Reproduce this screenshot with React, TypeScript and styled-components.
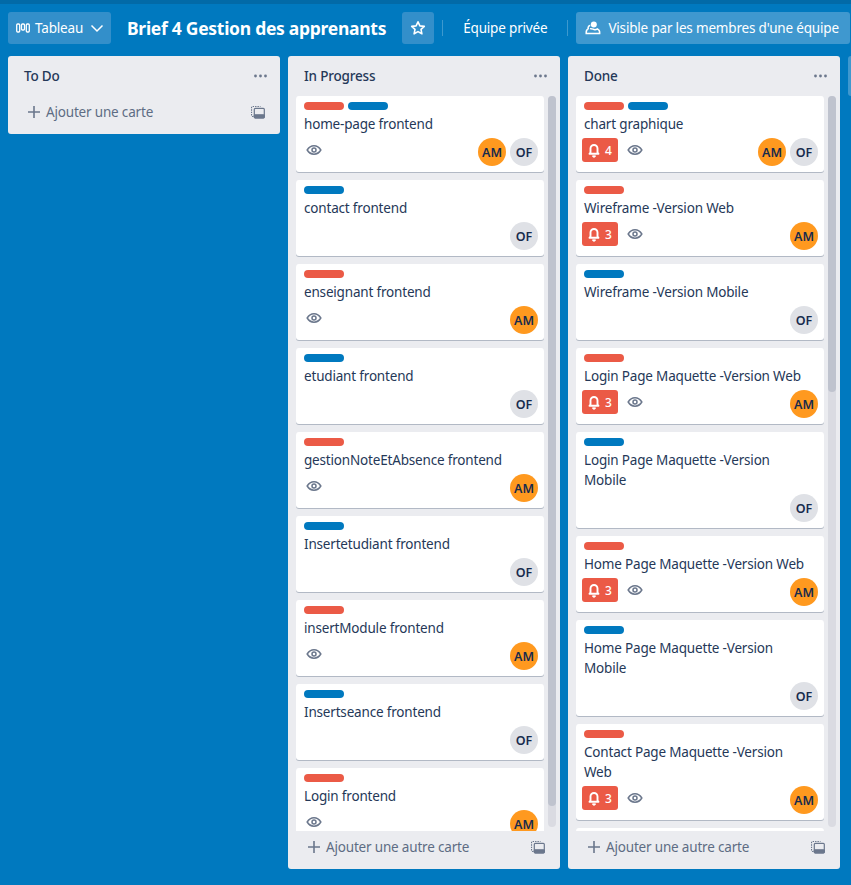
import React from 'react';
import styled, { createGlobalStyle } from 'styled-components';

const GlobalStyle = createGlobalStyle`
    html, body {
        margin: 0;
        padding: 0;
        height: 100%;
        overflow: hidden;
    }
    body {
        font-family: "Noto Sans", "Open Sans", sans-serif;
        background: #0079bf;
        color: #172b4d;
    }
`;

const Page = styled.div`
    width: 851px;
    height: 885px;
    overflow: hidden;
    display: flex;
    flex-direction: column;
`;

const TopStrip = styled.div`
    height: 4px;
    flex: none;
    background: #026aa7;
`;

const BoardHeader = styled.div`
    display: flex;
    align-items: center;
    flex: none;
    height: 32px;
    margin-top: 8px;
    padding-left: 8px;
    white-space: nowrap;
`;

const HeaderButton = styled.div<{ $strong?: boolean }>`
    display: flex;
    align-items: center;
    flex: none;
    height: 32px;
    border-radius: 3px;
    background: ${(p) => (p.$strong ? '#3f98cf' : '#338fca')};
    color: #fff;
    font-size: 13.5px;
    letter-spacing: -0.18px;
`;

const ViewButton = styled(HeaderButton)`
    width: 103px;
    padding-left: 8px;
    box-sizing: border-box;
    gap: 5px;
`;

const BoardTitle = styled.h1`
    margin: 0 16px;
    color: #fff;
    font-size: 17.5px;
    font-weight: 700;
    line-height: 32px;
    letter-spacing: -0.28px;
`;

const StarButton = styled(HeaderButton)`
    width: 32px;
    justify-content: center;
`;

const Divider = styled.span`
    flex: none;
    width: 1px;
    height: 16px;
    background: rgba(255, 255, 255, 0.24);
    margin: 0 8px;
`;

const TeamLabel = styled.span`
    color: #fff;
    font-size: 13.5px;
    letter-spacing: -0.18px;
    padding: 0 12px;
`;

const VisibleButton = styled(HeaderButton)`
    padding: 0 11px 0 9px;
    gap: 7px;
`;

const Board = styled.div`
    display: flex;
    align-items: flex-start;
    gap: 8px;
    padding: 12px 0 0 8px;
`;

const Column = styled.section<{ $full?: boolean }>`
    flex: none;
    width: 272px;
    height: ${(p) => (p.$full ? '813px' : 'auto')};
    display: flex;
    flex-direction: column;
    background: #ebecf0;
    border-radius: 3px;
`;

const NextColumnEdge = styled.div`
    flex: none;
    width: 272px;
    height: 40px;
    background: #3f98cf;
    border-radius: 3px;
`;

const ColumnHeader = styled.header`
    display: flex;
    align-items: center;
    justify-content: space-between;
    flex: none;
    height: 40px;
    padding: 0 13px 0 16px;
`;

const ColumnTitle = styled.h2`
    margin: 0;
    font-size: 13.5px;
    font-weight: 500;
    letter-spacing: -0.18px;
    color: #253858;
`;

const ScrollArea = styled.div`
    flex: 1;
    min-height: 0;
    display: flex;
    gap: 4px;
    padding: 0 4px 0 8px;
`;

const CardList = styled.div`
    width: 248px;
    flex: none;
    overflow: hidden;
`;

const ScrollTrack = styled.div`
    width: 8px;
    flex: none;
    height: 731px;
    border-radius: 4px;
    background: #dadbe2;
`;

const ScrollThumb = styled.div<{ $height: number }>`
    height: ${(p) => p.$height}px;
    border-radius: 4px;
    background: #bfc3ce;
`;

const Card = styled.article`
    background: #fff;
    border-radius: 3px;
    box-shadow: 0 1px 0 #091e4240;
    margin-bottom: 8px;
    padding: 6px 6px 6px 8px;
    box-sizing: border-box;
`;

const CardStub = styled(Card)`
    height: 76px;
`;

const LabelRow = styled.div`
    display: flex;
    gap: 4px;
    height: 8px;
    margin-bottom: 4px;
`;

const Label = styled.span<{ $color: string }>`
    width: 40px;
    height: 8px;
    border-radius: 4px;
    background: ${(p) => p.$color};
`;

const CardTitle = styled.div`
    font-size: 13.5px;
    line-height: 20px;
    letter-spacing: -0.18px;
    color: #253858;
    padding-right: 6px;
`;

const CardFoot = styled.div`
    display: flex;
    align-items: flex-start;
    justify-content: space-between;
    height: 28px;
    margin-top: 4px;
    margin-left: -2px;
`;

const Badges = styled.div`
    display: flex;
    align-items: center;
    gap: 9px;
    height: 24px;
`;

const Alert = styled.span`
    display: flex;
    align-items: center;
    gap: 4px;
    width: 36px;
    height: 24px;
    box-sizing: border-box;
    padding-left: 5px;
    border-radius: 3px;
    background: #eb5a46;
    color: #fff;
    font-size: 12px;
    font-weight: 500;
`;

const Seen = styled.span<{ $alone?: boolean }>`
    display: flex;
    color: #6b778c;
    margin-left: ${(p) => (p.$alone ? '4px' : '0')};
`;

const Members = styled.div`
    display: flex;
    gap: 4px;
`;

const Avatar = styled.span<{ $orange?: boolean }>`
    width: 28px;
    height: 28px;
    border-radius: 50%;
    display: flex;
    align-items: center;
    justify-content: center;
    background: ${(p) => (p.$orange ? '#ff991f' : '#dfe1e6')};
    color: #172b4d;
    font-size: 12.5px;
    font-weight: 600;
    letter-spacing: -0.1px;
`;

const ColumnFooter = styled.footer`
    display: flex;
    align-items: center;
    justify-content: space-between;
    flex: none;
    height: 38px;
    box-sizing: border-box;
    padding: 0 15px 6px 19px;
    color: #5e6c84;
    font-size: 13.5px;
    letter-spacing: -0.18px;
`;

const AddLabel = styled.span`
    display: flex;
    align-items: center;
    gap: 5px;
`;

const FooterIcon = styled.svg`
    display: block;
    color: #6b778c;
`;

const Chevron = styled.svg`
    margin-left: 1px;
`;

const BoardIcon = () => (
    <svg width="14" height="16" viewBox="0 0 14 16" fill="none" stroke="#fff" strokeWidth="1.3">
        <rect x="0.7" y="4" width="3" height="8" rx="1" />
        <rect x="5.5" y="4" width="3" height="6" rx="1" />
        <rect x="10.3" y="4" width="3" height="8" rx="1" />
    </svg>
);

const ChevronIcon = () => (
    <Chevron width="16" height="16" viewBox="0 0 16 16" fill="none" stroke="#fff" strokeWidth="1.5">
        <path d="M2.5 5.5 8 11l5.5-5.5" />
    </Chevron>
);

const StarIcon = () => (
    <svg width="16" height="16" viewBox="0 0 16 16" fill="none" stroke="#fff" strokeWidth="1.6" strokeLinejoin="round">
        <path d="M8 1.8 9.9 5.9l4.4.5-3.3 3 .9 4.4L8 11.6l-3.9 2.200.9-4.400-3.300-3 4.400-.5z" />
    </svg>
);

const TeamIcon = () => (
    <svg width="16" height="16" viewBox="0 0 16 16" fill="none" stroke="#fff" strokeWidth="1.5">
        <circle cx="8.8" cy="4.4" r="3" fill="#fff" stroke="none" />
        <path d="M5.3 5.6a2.200 2.200 0 0 0-2 3.100C1.800 9.500 1 11 1.200 13.400h13.500c.2-2.200-.7-3.800-2.300-4.600-1.300 1-3 1.100-4.400.4-1-.5-1.800-.8-2.900-.4" />
    </svg>
);

const DotsIcon = () => (
    <svg width="13" height="4" viewBox="0 0 13 4" fill="#6b778c">
        <circle cx="1.5" cy="2" r="1.4" />
        <circle cx="6.5" cy="2" r="1.4" />
        <circle cx="11.5" cy="2" r="1.4" />
    </svg>
);

const PlusIcon = () => (
    <FooterIcon width="14" height="14" viewBox="0 0 14 14" fill="none" stroke="currentColor" strokeWidth="1.6">
        <path d="M7 1v12M1 7h12" />
    </FooterIcon>
);

const TemplateIcon = () => (
    <FooterIcon width="14" height="14" viewBox="0 0 14 14" fill="none" stroke="currentColor" strokeWidth="1.2">
        <path d="M2.5 11.500H1.500a1 1 0 0 1-1-1v-8a1 1 0 0 1 1-1h8" strokeDasharray="1.4 1" />
        <rect x="3.3" y="3.3" width="10" height="9.5" rx="1" />
        <rect x="3.3" y="9.8" width="10" height="3" rx="0.8" fill="currentColor" />
    </FooterIcon>
);

const EyeIcon = () => (
    <svg width="16" height="16" viewBox="0 0 16 16" fill="none" stroke="currentColor" strokeWidth="1.5">
        <path d="M1.2 8C2.8 5.300 5.200 3.800 8 3.800s5.200 1.500 6.800 4.200c-1.600 2.700-4 4.200-6.800 4.200S2.800 10.700 1.200 8z" />
        <circle cx="8" cy="8" r="2" />
    </svg>
);

const BellIcon = () => (
    <svg width="14" height="16" viewBox="0 0 14 16" fill="#fff" stroke="#fff" strokeWidth="1.9" strokeLinejoin="round">
        <path fill="none" d="M3.5 10.500V6.500a3.500 3.500 0 0 1 7 0v4l1 1.300h-9z" />
        <path strokeWidth="0.8" d="M5.500 13.800h3a1.500 1.500 0 0 1-3 0z" />
    </svg>
);

type Tag = 'red' | 'blue';
type Member = 'AM' | 'OF';

interface CardData {
    title: string;
    tags: Tag[];
    members: Member[];
    alert?: number;
    seen?: boolean;
}

const TAG_COLORS: Record<Tag, string> = { red: '#eb5a46', blue: '#0079bf' };

const IN_PROGRESS: CardData[] = [
    { title: 'home-page frontend', tags: ['red', 'blue'], members: ['AM', 'OF'], seen: true },
    { title: 'contact frontend', tags: ['blue'], members: ['OF'] },
    { title: 'enseignant frontend', tags: ['red'], members: ['AM'], seen: true },
    { title: 'etudiant frontend', tags: ['blue'], members: ['OF'] },
    { title: 'gestionNoteEtAbsence frontend', tags: ['red'], members: ['AM'], seen: true },
    { title: 'Insertetudiant frontend', tags: ['blue'], members: ['OF'] },
    { title: 'insertModule frontend', tags: ['red'], members: ['AM'], seen: true },
    { title: 'Insertseance frontend', tags: ['blue'], members: ['OF'] },
    { title: 'Login frontend', tags: ['red'], members: ['AM'], seen: true },
];

const DONE: CardData[] = [
    { title: 'chart graphique', tags: ['red', 'blue'], members: ['AM', 'OF'], alert: 4, seen: true },
    { title: 'Wireframe -Version Web', tags: ['red'], members: ['AM'], alert: 3, seen: true },
    { title: 'Wireframe -Version Mobile', tags: ['blue'], members: ['OF'] },
    { title: 'Login Page Maquette -Version Web', tags: ['red'], members: ['AM'], alert: 3, seen: true },
    { title: 'Login Page Maquette -Version Mobile', tags: ['blue'], members: ['OF'] },
    { title: 'Home Page Maquette -Version Web', tags: ['red'], members: ['AM'], alert: 3, seen: true },
    { title: 'Home Page Maquette -Version Mobile', tags: ['blue'], members: ['OF'] },
    { title: 'Contact Page Maquette -Version Web', tags: ['red'], members: ['AM'], alert: 3, seen: true },
];

function TaskCard({ card }: { card: CardData }) {
    return (
        <Card>
            <LabelRow>
                {card.tags.map((t) => (
                    <Label key={t} $color={TAG_COLORS[t]} />
                ))}
            </LabelRow>
            <CardTitle>{card.title}</CardTitle>
            <CardFoot>
                <Badges>
                    {card.alert !== undefined && (
                        <Alert>
                            <BellIcon />
                            {card.alert}
                        </Alert>
                    )}
                    {card.seen && (
                        <Seen $alone={card.alert === undefined}>
                            <EyeIcon />
                        </Seen>
                    )}
                </Badges>
                <Members>
                    {card.members.map((m) => (
                        <Avatar key={m} $orange={m === 'AM'}>
                            {m}
                        </Avatar>
                    ))}
                </Members>
            </CardFoot>
        </Card>
    );
}

function CardColumn({ title, cards, thumb, more }: { title: string; cards: CardData[]; thumb: number; more?: boolean }) {
    return (
        <Column $full>
            <ColumnHeader>
                <ColumnTitle>{title}</ColumnTitle>
                <DotsIcon />
            </ColumnHeader>
            <ScrollArea>
                <CardList>
                    {cards.map((c) => (
                        <TaskCard key={c.title} card={c} />
                    ))}
                    {more && <CardStub />}
                </CardList>
                <ScrollTrack>
                    <ScrollThumb $height={thumb} />
                </ScrollTrack>
            </ScrollArea>
            <ColumnFooter>
                <AddLabel>
                    <PlusIcon />
                    Ajouter une autre carte
                </AddLabel>
                <TemplateIcon />
            </ColumnFooter>
        </Column>
    );
}

export default function App() {
    return (
        <Page>
            <GlobalStyle />
            <TopStrip />
            <BoardHeader>
                <ViewButton>
                    <BoardIcon />
                    Tableau
                    <ChevronIcon />
                </ViewButton>
                <BoardTitle>Brief 4 Gestion des apprenants</BoardTitle>
                <StarButton>
                    <StarIcon />
                </StarButton>
                <Divider />
                <TeamLabel>Équipe privée</TeamLabel>
                <Divider />
                <VisibleButton $strong>
                    <TeamIcon />
                    Visible par les membres d'une équipe
                </VisibleButton>
            </BoardHeader>
            <Board>
                <Column>
                    <ColumnHeader>
                        <ColumnTitle>To Do</ColumnTitle>
                        <DotsIcon />
                    </ColumnHeader>
                    <ColumnFooter>
                        <AddLabel>
                            <PlusIcon />
                            Ajouter une carte
                        </AddLabel>
                        <TemplateIcon />
                    </ColumnFooter>
                </Column>
                <CardColumn title="In Progress" cards={IN_PROGRESS} thumb={710} />
                <CardColumn title="Done" cards={DONE} thumb={296} more />
                <NextColumnEdge />
            </Board>
        </Page>
    );
}
